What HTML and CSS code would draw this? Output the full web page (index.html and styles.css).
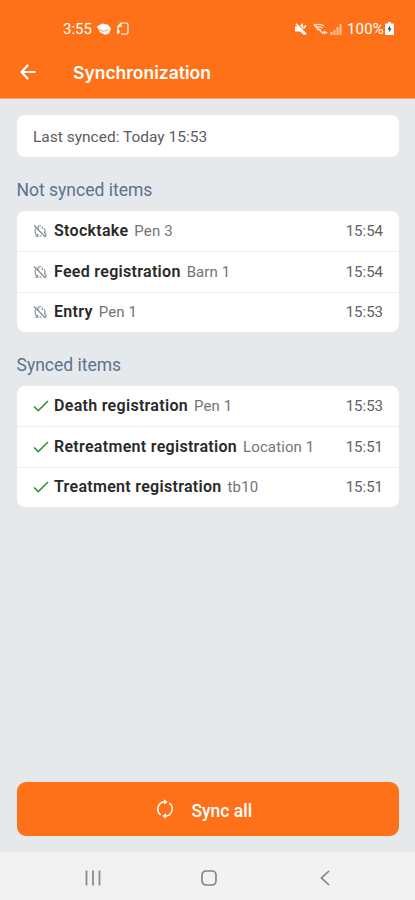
FILE: index.html
```html
<!DOCTYPE html>
<html lang="en">
<head>
<meta charset="utf-8">
<title>Synchronization</title>
<link rel="stylesheet" href="styles.css">
</head>
<body>
<svg width="0" height="0" class="defs" aria-hidden="true">
  <symbol id="unsynced" viewBox="0 0 14 14">
    <g fill="none" stroke="currentColor" stroke-width="1.1">
      <path d="M1 1.500L12.500 13M2.600 4.600A5 5 0 0 0 4.500 11.400M5 2.300L8 1.500M11.200 4.200a5 5 0 0 1 .2 5.200M6.500 12.200L8.500 11.800"/>
      <path d="M5 2.200v3.200M4.800 10v2.200H2.500M9.300 5V2.500M12.800 8.800v4"/>
    </g>
  </symbol>
  <symbol id="check" viewBox="0 0 16 12">
    <path d="M1 6.500L5.300 10.600L15 1" fill="none" stroke="currentColor" stroke-width="1.600"/>
  </symbol>
</svg>
<div class="screen">
  <header class="header">
    <div class="status">
      <div class="status-left">
        <span class="clock">3:55</span>
        <svg class="s-cap" viewBox="0 0 14 12"><path d="M0 3.500L5 .5l6 1.200 3 3.800-2 5-4 1.300-5-2.600z" fill="#fff"/><path d="M2 6.500l5 2 4-2" fill="none" stroke="#ff7119" stroke-width=".7"/></svg>
        <svg class="s-note" viewBox="0 0 13 13"><path d="M5 1H10.500Q12 1 12 2.500V10.500Q12 12 10.500 12H5M5 1L2 4.500V8M5 1v3.500H2" fill="none" stroke="#fff" stroke-width="1.200"/><path d="M1 12.500V8.500l1.500-1L4 9.500 3.500 11z" fill="#fff"/></svg>
      </div>
      <div class="status-right">
        <svg class="s-mute" viewBox="0 0 12 12"><path d="M0 3.500L3 3l8 8.500-2 .5-4-3.500H0zM5 2.500L8 0v5.500z" fill="#fff"/><path d="M1 .8l10.200 10.200M8.500 5.500l2.500-3.300" stroke="#fff" stroke-width="1.500"/></svg>
        <svg class="s-wifi" viewBox="0 0 15 12"><path d="M1 3Q6-.5 11 3M2.500 5Q6 2.500 9.500 5M4 7q2-1.500 4 0M1 1l9 9.500" fill="none" stroke="#fff" stroke-width="1.200" opacity=".85"/><path d="M9.500 9.500L12 7.500v4zM12.500 8l2 1.500-2 1.500z" fill="#fff"/></svg>
        <svg class="s-signal" viewBox="0 0 12 12"><path d="M1.500 9v3M4.500 7v5M7.500 4v8M10.500 1v11" stroke="#fff" stroke-width="1.900" opacity=".6"/></svg>
        <span class="percent">100%</span>
        <svg class="s-battery" viewBox="0 0 9 13"><path d="M3 0h3v1.500h2q1 0 1 1V12q0 1-1 1H1q-1 0-1-1V2.500q0-1 1-1h2z" fill="#fff"/><path d="M5.200 3.500L2.300 7.500h2L3.800 10.500 6.700 6.500H5z" fill="#444"/></svg>
      </div>
    </div>
    <div class="appbar">
      <svg class="back" viewBox="0 0 16 16"><path d="M8 1L1.500 8L8 15M1.500 8H15.500" fill="none" stroke="#fff" stroke-width="2"/></svg>
      <h1 class="title">Synchronization</h1>
    </div>
  </header>
  <main class="content">
    <div class="card last">Last synced: Today 15:53</div>
    <h2 class="section">Not synced items</h2>
    <ul class="card list">
      <li class="row"><svg class="icon pending"><use href="#unsynced"/></svg><b>Stocktake</b><span class="place">Pen 3</span><time>15:54</time></li>
      <li class="row"><svg class="icon pending"><use href="#unsynced"/></svg><b>Feed registration</b><span class="place">Barn 1</span><time>15:54</time></li>
      <li class="row"><svg class="icon pending"><use href="#unsynced"/></svg><b>Entry</b><span class="place">Pen 1</span><time>15:53</time></li>
    </ul>
    <h2 class="section">Synced items</h2>
    <ul class="card list">
      <li class="row"><svg class="icon done"><use href="#check"/></svg><b>Death registration</b><span class="place">Pen 1</span><time>15:53</time></li>
      <li class="row"><svg class="icon done"><use href="#check"/></svg><b>Retreatment registration</b><span class="place">Location 1</span><time>15:51</time></li>
      <li class="row"><svg class="icon done"><use href="#check"/></svg><b>Treatment registration</b><span class="place">tb10</span><time>15:51</time></li>
    </ul>
    <button class="sync"><svg class="sync-icon" viewBox="0 0 18 20"><path d="M4.800 16A7.400 7.400 0 0 1 8.500 2.700M13.200 4A7.400 7.400 0 0 1 9.500 17.300" fill="none" stroke="#fff" stroke-width="1.500"/><path d="M8 .2l3.600 2.700L8 5.700zM10 14.300l-3.600 2.800L10 19.800z" fill="#fff"/></svg><span>Sync all</span></button>
  </main>
  <nav class="nav">
    <svg viewBox="0 0 16 16"><path d="M1.500 .5v15M8 .5v15M14.500 .5v15" stroke="#8c8c8c" stroke-width="1.800"/></svg>
    <svg viewBox="0 0 16 16"><rect x="1" y="1" width="14" height="14" rx="4" fill="none" stroke="#858585" stroke-width="1.700"/></svg>
    <svg viewBox="0 0 16 16"><path d="M12 1L4.500 8l7.500 7" fill="none" stroke="#858585" stroke-width="1.700"/></svg>
  </nav>
</div>
</body>
</html>
```
FILE: styles.css
```css
* { box-sizing: border-box; }
body { margin: 0; font-family: Roboto, "Liberation Sans", sans-serif; color: #5c5c5c; }
.defs { position: absolute; }
.screen { display: flex; flex-direction: column; height: 900px; background: #e5e9ec; }
.header { height: 99px; background: #ff7119; color: #fff; border-bottom: 1px solid #ffa468; }
.status { display: flex; justify-content: space-between; height: 46px; padding: 11px 21px 0 63px; align-items: center; }
.status-left, .status-right { display: flex; align-items: center; }
.clock, .percent { font-size: 15px; line-height: 20px; }
.clock { width: 34px; }
.s-cap { width: 14px; height: 12px; margin-right: 5px; }
.s-note { width: 13px; height: 13px; }
.s-mute { width: 12px; height: 12px; margin-right: 6px; }
.s-wifi { width: 15px; height: 12px; margin-right: 2px; }
.s-signal { width: 12px; height: 12px; margin-right: 5px; }
.percent { letter-spacing: .2px; }
.s-battery { width: 9px; height: 13px; margin-left: 1px; }
.appbar { display: flex; align-items: center; height: 51px; padding-left: 20px; }
.back { width: 16px; height: 16px; margin-right: 37px; }
.title { margin: 0; padding-top: 2px; font: 600 17.500px/24px Inter, sans-serif; }
.content { flex: 1; display: flex; flex-direction: column; padding: 16px 16px 16px 16.500px; }
.card { margin: 0; background: #fff; border-radius: 8px; }
.last { height: 42px; padding: 2px 16.500px 0; font-size: 15.500px; line-height: 40px; }
.section { margin: 0; height: 54px; padding-top: 11px; font-size: 17.500px; font-weight: 400; line-height: 45px; color: #5b738b; }
.list { padding: 0; list-style: none; height: 121px; display: grid; grid-template-rows: repeat(3, 1fr); overflow: hidden; }
.row { display: flex; align-items: center; padding: 0 16px 0 16.500px; font-size: 15px; line-height: 20px; }
.row + .row { border-top: 1px solid #eceeef; }
.icon { flex: none; }
.pending { width: 14px; height: 14px; color: #7b888f; margin-right: 7px; }
.done { width: 16px; height: 12px; color: #32933f; margin-right: 5px; }
.row b { font-weight: 600; font-size: 16px; letter-spacing: .3px; color: #292929; margin-right: 6px; }
.place { color: #747474; letter-spacing: .12px; }
time { margin-left: auto; font-size: 15px; color: #626262; }
.sync { margin-top: auto; height: 54px; display: flex; justify-content: center; align-items: center; gap: 17px; border: 0; border-radius: 9px; background: #ff7119; color: #fff; font: 500 17.500px/24px Roboto, sans-serif; padding: 4px 7px 0 0; }
.sync-icon { width: 18px; height: 20px; margin-bottom: 5px; }
.nav { height: 48px; display: flex; gap: 100px; justify-content: center; align-items: center; background: #f2f2f2; padding: 3px 0 0 2px; }
.nav svg { width: 16px; height: 16px; }
```
